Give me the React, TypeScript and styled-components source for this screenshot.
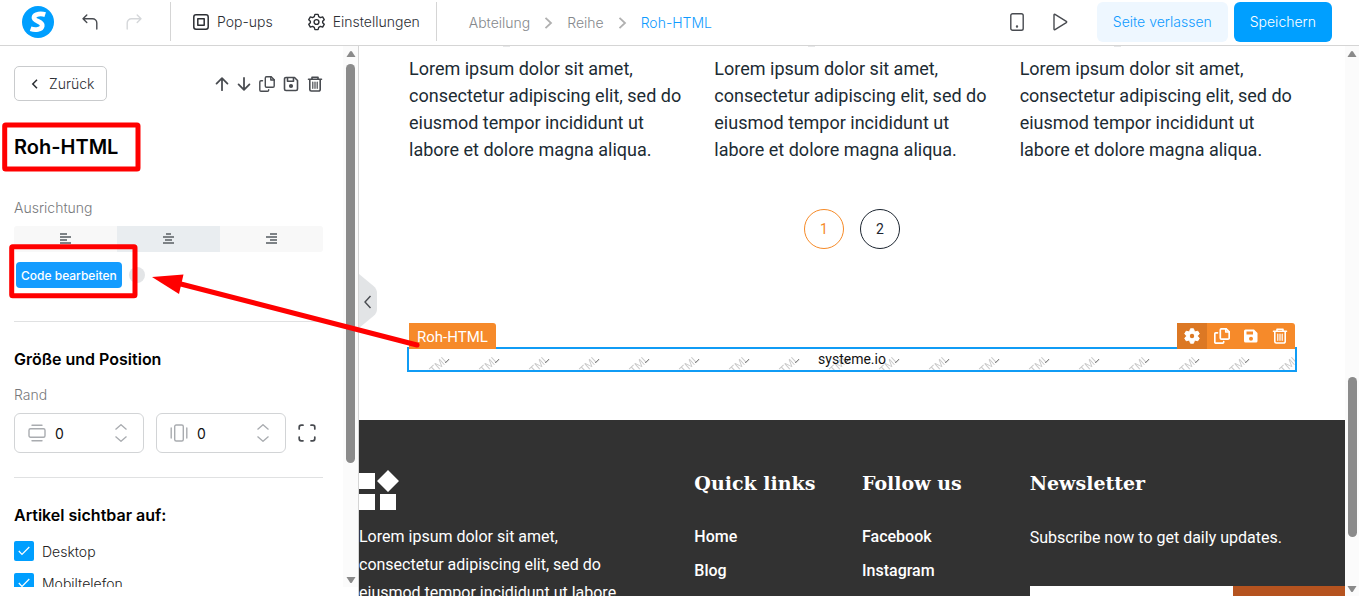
import React from "react";
import styled, { createGlobalStyle, css } from "styled-components";

const GlobalStyle = createGlobalStyle`
  *, *::before, *::after { box-sizing: border-box; }
  body { margin: 0; background: #fff; font-family: Inter, "Liberation Sans", sans-serif; font-size: 14px; color: #2b2e33; }
  h1, h2, h3, p, ul { margin: 0; padding: 0; }
  ul { list-style: none; }
  button, input { font: inherit; color: inherit; }
  button { border: 0; background: none; padding: 0; cursor: pointer; }
  a { color: inherit; text-decoration: none; }
  svg { display: block; flex: none; }
`;

const Page = styled.div`
  position: relative;
  display: flex;
  flex-direction: column;
  height: 100vh;
  overflow: hidden;
`;

/* ---------- top bar ---------- */
const TopBar = styled.header`
  display: flex;
  align-items: center;
  flex: none;
  height: 46px;
  padding: 0 27px 2px 22px;
  border-bottom: 1px solid #d5d5d5;
`;
const History = styled.div`
  display: flex;
  gap: 28px;
  padding: 0 28px;
`;
const IconButton = styled.button<{ $muted?: boolean }>`
  display: grid;
  place-items: center;
  color: ${(p) => (p.$muted ? "#d5d7da" : "#484b50")};
`;
const BarMenu = styled.nav`
  display: flex;
  align-items: center;
  gap: 35px;
  height: 39px;
  padding: 0 16px 0 22px;
  border: solid #d5d5d5;
  border-width: 0 1px;
`;
const BarItem = styled.button`
  display: flex;
  align-items: center;
  gap: 8px;
  font-weight: 300;
`;
const Crumbs = styled.nav`
  display: flex;
  align-items: center;
  gap: 14px;
  flex: 1;
  padding: 2px 0 0 32px;
  color: #b0b0b0;
`;
const Crumb = styled.a<{ $current?: boolean }>`
  font-weight: 300;
  color: ${(p) => (p.$current ? "#0f9bff" : "#85888c")};
`;
const Preview = styled.div`
  display: flex;
  gap: 29px;
  padding-right: 29px;
`;
const Actions = styled.div`
  display: flex;
  gap: 6px;
`;
const ActionButton = styled.button<{ $primary?: boolean }>`
  height: 40px;
  padding: 0 16px;
  border-radius: 6px;
  font-weight: 300;
  color: ${(p) => (p.$primary ? "#fff" : "#0f9bff")};
  background: ${(p) => (p.$primary ? "#009fff" : "#eef7ff")};
`;

/* ---------- scroll bars ---------- */
const Bar = styled.div<{ $width: number }>`
  display: flex;
  flex-direction: column;
  flex: none;
  width: ${(p) => p.$width}px;
  background: #fbfbfb;
`;
const BarArrow = styled.div<{ $down?: boolean }>`
  display: grid;
  justify-items: center;
  align-items: ${(p) => (p.$down ? "end" : "start")};
  height: 18px;
  padding: 4px 0 3px;
  color: #8a8a8a;
`;
const Track = styled.div<{ $before: number; $after: number; $size: number }>`
  display: grid;
  flex: 1;
  justify-content: center;
  grid-template-columns: 9px;
  grid-template-rows: ${(p) => `${p.$before}fr ${p.$size}fr ${p.$after}fr`};
`;
const Thumb = styled.div`
  grid-row: 2;
  border-radius: 5px;
  background: #8b8b8b;
`;

/* ---------- side panel ---------- */
const Body = styled.div`
  display: flex;
  flex: 1;
  min-height: 0;
`;
const Side = styled.aside`
  display: flex;
  flex: none;
  width: 359px;
  padding-bottom: 9px;
  border-right: 1px solid #d5d5d5;
`;
const SideContent = styled.div`
  flex: 1;
  overflow: hidden;
  padding: 20px 20px 0 14px;
`;
const SideHead = styled.div`
  display: flex;
  align-items: center;
  justify-content: space-between;
`;
const BackButton = styled.button`
  display: flex;
  align-items: center;
  gap: 10px;
  height: 35px;
  padding: 0 12px 0 16px;
  border: 1px solid #c9cbcd;
  border-radius: 5px;
  font-weight: 300;
`;
const ItemTools = styled.div`
  display: flex;
  gap: 8px;
`;
const Title = styled.h1`
  padding: 32px 0 37px;
  font-size: 20px;
  line-height: 28px;
  font-weight: 600;
  color: #000;
`;
const FieldLabel = styled.div`
  line-height: 20px;
  font-weight: 300;
  color: #77797c;
`;
const Segments = styled.div`
  display: grid;
  grid-template-columns: repeat(3, 1fr);
  margin: 8px 0 10px;
  border-radius: 3px;
  overflow: hidden;
`;
const Segment = styled.button<{ $active?: boolean }>`
  display: grid;
  place-items: center;
  height: 26px;
  color: #7d8286;
  background: ${(p) => (p.$active ? "#e9edf0" : "#f8f8f8")};
`;
const CodeRow = styled.div`
  display: flex;
  align-items: center;
  gap: 7px;
  padding: 0 2px 33px;
  border-bottom: 1px solid #e0e1e2;
`;
const CodeButton = styled.button`
  height: 26px;
  padding: 0 5px;
  border-radius: 4px;
  font-size: 12px;
  font-weight: 500;
  color: #fff;
  background: #149cff;
`;
const HelpDot = styled.button`
  width: 16px;
  height: 16px;
  border-radius: 50%;
  background: #e3e5e7;
`;
const SectionTitle = styled.h2`
  padding: 25px 0 14px;
  font-size: 16px;
  line-height: 24px;
  font-weight: 600;
  color: #000;
`;
const Margins = styled.div`
  display: flex;
  align-items: center;
  gap: 12px;
  padding: 8px 0 24px;
  border-bottom: 1px solid #e0e1e2;
`;
const NumberBox = styled.label`
  display: flex;
  align-items: center;
  gap: 9px;
  width: 130px;
  height: 40px;
  padding: 0 16px 0 13px;
  border: 1px solid #d2d4d6;
  border-radius: 6px;
  color: #a9acb0;

  input {
    flex: 1;
    min-width: 0;
    padding: 0;
    border: 0;
    outline: 0;
    background: none;
    color: #111;
  }
`;
const Steppers = styled.span`
  display: grid;
  gap: 6px;
`;
const Checks = styled.div`
  display: grid;
  gap: 12px;
`;
const Check = styled.label`
  display: flex;
  align-items: center;
  gap: 8px;
  font-weight: 300;
  color: #222;
`;
const CheckMark = styled.span`
  display: grid;
  place-items: center;
  width: 20px;
  height: 20px;

  > * { grid-area: 1 / 1; }
  input {
    appearance: none;
    width: 20px;
    height: 20px;
    margin: 0;
    border-radius: 2px;
    background: #009fff;
  }
  svg { pointer-events: none; }
`;

/* ---------- canvas ---------- */
const Canvas = styled.main`
  position: relative;
  display: flex;
  flex-direction: column;
  flex: 1;
  min-width: 0;
  overflow: hidden;
  font-family: Roboto, "Liberation Sans", sans-serif;
  color: #1c2b33;
`;
const Collapse = styled.button`
  position: absolute;
  left: 0;
  top: 227px;
`;
const Columns = styled.div`
  display: grid;
  grid-template-columns: repeat(3, 1fr);
  gap: 30px;
  padding: 0 50px;
`;
const Column = styled.div`
  font-size: 18px;
  line-height: 27px;
`;
const Tick = styled.div`
  width: 7px;
  height: 1px;
  margin: 0 0 8px 94px;
  background: #e6e7e8;
`;
const Pager = styled.nav`
  display: flex;
  justify-content: center;
  gap: 16px;
  padding: 46px 0 98px;
`;
const PageButton = styled.button<{ $current?: boolean }>`
  width: 40px;
  height: 40px;
  border: 1px solid currentColor;
  border-radius: 50%;
  font-size: 14px;
  color: ${(p) => (p.$current ? "#f68a27" : "#1c2530")};
`;
const Selected = styled.section`
  position: relative;
  height: 25px;
  margin: 0 48px 48px;
  border: 2px solid #109cf5;
  text-align: center;
  font-size: 14px;
  line-height: 21px;
  color: #111;
`;
const Watermark = styled.svg`
  position: absolute;
  inset: 0;
  width: 100%;
  height: 100%;
`;
const SelectedText = styled.p`
  position: relative;
`;
const tag = css`
  position: absolute;
  top: -26px;
  height: 26px;
  border-radius: 0 3px 0 0;
  background: #f68a2a;
  color: #fff;
`;
const TagName = styled.div`
  ${tag}
  left: 0;
  padding: 0 8px;
  font-size: 15px;
  line-height: 28px;
`;
const TagTools = styled.div`
  ${tag}
  right: 0;
  display: flex;
  padding-right: 1px;
  overflow: hidden;
`;
const TagTool = styled.button<{ $active?: boolean }>`
  display: grid;
  place-items: center;
  width: ${(p) => (p.$active ? 30 : 29)}px;
  background: ${(p) => (p.$active ? "#dc7824" : "none")};
`;

/* ---------- site footer ---------- */
const Footer = styled.footer`
  flex: 1;
  min-height: 0;
  padding-top: 48px;
  background: #323232;
  color: #fff;
`;
const FooterGrid = styled.div`
  display: grid;
  grid-template-columns: 4fr 2fr 2fr 4fr;
  margin-right: -20px;
`;
const About = styled.p`
  padding: 13px 64px 0 0;
  font-size: 16px;
  line-height: 28px;
`;
const FooterTitle = styled.h3`
  padding-bottom: 25px;
  font-family: "Roboto Slab", "DejaVu Serif", serif;
  font-size: 19px;
  line-height: 30px;
  font-weight: 700;
`;
const Links = styled.ul`
  display: grid;
  gap: 6px;
  font-size: 16px;
  line-height: 28px;
  font-weight: 500;
`;
const Note = styled.p`
  font-size: 16px;
  line-height: 30px;
`;
const Subscribe = styled.form`
  display: grid;
  grid-template-columns: 203px 1fr;
  height: 50px;
  margin-top: 33px;

  input { min-width: 0; border: 0; background: #fff; }
  button { background: #b5531f; }
`;

const Annotations = styled.svg`
  position: absolute;
  left: 0;
  top: 0;
  pointer-events: none;
`;

/* ---------- icons ---------- */
type IconProps = { size?: number; sw?: number; children: React.ReactNode };
const Icon = ({ size = 16, sw = 1.5, children }: IconProps) => (
  <svg width={size} height={size} viewBox="0 0 16 16" fill="none" stroke="currentColor" strokeWidth={sw} strokeLinecap="round" strokeLinejoin="round" aria-hidden="true">
    {children}
  </svg>
);
const Undo = () => <Icon sw={1.4}><path d="M4.8 1 1 4.8l3.8 3.8M1 4.8h9.5a4.3 4.3 0 0 1 4.3 4.3V15" /></Icon>;
const Redo = () => <Icon sw={1.4}><path d="m11.2 1 3.8 3.8-3.8 3.8M15 4.8H5.5a4.3 4.3 0 0 0-4.3 4.3V15" /></Icon>;
const Popup = () => <Icon><rect x=".8" y=".8" width="14.4" height="14.4" rx="2.2" /><rect x="4.8" y="4.8" width="6.4" height="6.4" /></Icon>;
const GearPath = "M6.5.8h3l.6 2.1 1.6.9 2.1-.6 1.5 2.6L13.8 7.3v1.4l1.5 1.5-1.5 2.6-2.1-.6-1.600.9-.6 2.1h-3l-.6-2.100-1.600-.9-2.100.6-1.500-2.600L2.200 8.700V7.300L.7 5.800l1.500-2.600 2.100.6 1.600-.9z";
const Gear = () => <svg width="17" height="18" viewBox="0 -.5 16 17" fill="none" stroke="currentColor" strokeWidth="1.3" strokeLinejoin="round"><path d={GearPath} /><circle cx="8" cy="8" r="2.3" /></svg>;
const Chevron = () => <svg width="9" height="12" viewBox="0 0 9 12" fill="none" stroke="currentColor" strokeWidth="1.8"><path d="m1.5 .8 5.500 5.200-5.500 5.200" /></svg>;
const Phone = () => <svg width="14" height="18" viewBox="0 0 14 18" fill="none" stroke="currentColor" strokeWidth="1.4"><rect x=".8" y=".8" width="12.4" height="16.4" rx="1.8" /><circle cx="7" cy="13.5" r=".5" fill="currentColor" /></svg>;
const Play = () => <svg width="15" height="18" viewBox="0 0 15 18" fill="none" stroke="currentColor" strokeWidth="1.4" strokeLinejoin="round"><path d="M1 2v14q0 1.200 1 .6l11.300-7q.8-.6 0-1.200L2 1.400Q1 .8 1 2z" /></svg>;
const ArrowUp = () => <Icon size={14} sw={2}><path d="M8 15V1.800M1.800 7.600 8 1.400l6.200 6.200" /></Icon>;
const ArrowDown = () => <Icon size={14} sw={2}><path d="M8 1v13.200M1.800 8.400 8 14.600l6.200-6.200" /></Icon>;
const Copy = ({ sw = 1.4 }: { sw?: number }) => <Icon sw={sw}><path d="M7.500.8h4.700l3 3V10a1.200 1.200 0 0 1-1.200 1.200H7.500A1.200 1.200 0 0 1 6.300 10V2A1.200 1.200 0 0 1 7.500.8z" /><path d="M11.800.8V4h3.400M3.500 4.800H2A1.200 1.200 0 0 0 .8 6v8A1.200 1.200 0 0 0 2 15.200h6.500A1.200 1.200 0 0 0 9.700 14v-.3" /></Icon>;
const Save = () => <Icon sw={1.6}><path d="M3 1.500h8.500l3 3V13a1.500 1.500 0 0 1-1.500 1.500H3A1.500 1.500 0 0 1 1.500 13V3A1.500 1.500 0 0 1 3 1.500z" /><path d="M4.500 1.800v3.500h6V1.800" /><circle cx="8" cy="10" r="1.300" fill="currentColor" /></Icon>;
const Trash = () => <Icon sw={1.6}><path d="M1.500 3.300h13M5 3V1.300h6V3M2.800 3.500V13.500a1.500 1.500 0 0 0 1.500 1.500h7.400a1.500 1.500 0 0 0 1.500-1.500V3.500" /><path strokeWidth="1.200" d="M5.800 6v6.300M8 6v6.300M10.200 6v6.300" /></Icon>;
const GearSolid = () => <svg width="16" height="16" viewBox="0 0 16 16"><path fill="#fff" stroke="#fff" strokeLinejoin="round" d={GearPath} /><circle cx="8" cy="8" r="2.200" fill="#dc7824" /></svg>;
const SaveSolid = () => <svg width="14" height="14" viewBox="0 0 14 14"><path fill="#fff" fillRule="evenodd" d="M1.500.5h8.500l3.500 3.500v8a1.500 1.500 0 0 1-1.500 1.500H1.500A1.500 1.500 0 0 1 0 12V2A1.500 1.500 0 0 1 1.500.5zM2.500 2.500v3h6.500v-3zM7 7.700a2 2 0 1 0 0 4 2 2 0 0 0 0-4z" /></svg>;
const AlignIcon = ({ rows }: { rows: [number, number][] }) => (
  <svg width="11" height="12" viewBox="0 0 11 12" fill="none" stroke="currentColor" strokeWidth="2">
    {rows.map(([a, b], i) => <path key={i} d={`M${a} ${1 + i * 3}H${b}`} />)}
  </svg>
);
const MarginV = () => <svg width="18" height="18" viewBox="0 0 18 18" fill="none" stroke="currentColor" strokeWidth="1.4" strokeLinecap="round"><rect x="1" y="4.7" width="16" height="8.6" rx="1.5" /><path d="M4 1.200h10M4 16.800h10" /></svg>;
const MarginH = () => <svg width="18" height="18" viewBox="0 0 18 18" fill="none" stroke="currentColor" strokeWidth="1.4" strokeLinecap="round"><rect x="4.7" y="1" width="8.6" height="16" rx="1.5" /><path d="M1.200 4v10M16.800 4v10" /></svg>;
const Expand = () => <svg width="18" height="18" viewBox="0 0 18 18" fill="none" stroke="#484b50" strokeWidth="1.7" strokeLinecap="round"><path d="M1.200 5V3.200a2 2 0 0 1 2-2H5M13 1.200h1.800a2 2 0 0 1 2 2V5M16.800 13v1.800a2 2 0 0 1-2 2H13M5 16.800H3.200a2 2 0 0 1-2-2V13" /></svg>;
const Step = ({ down }: { down?: boolean }) => <svg width="12" height="6" viewBox="0 0 12 6" fill="none" stroke="currentColor" strokeWidth="1.3"><path d={down ? "M.5.5 6 5.300 11.500.5" : "M.5 5.500 6 .7l5.500 4.800"} /></svg>;
const Triangle = ({ down }: { down?: boolean }) => <svg width="10" height="8" viewBox="0 0 10 8"><path fill="currentColor" d={down ? "M.5 1h9L6 6.500q-1 1-2 0z" : "M.5 7h9L6 1.500q-1-1-2 0z"} /></svg>;

type ScrollbarProps = { width: number; before: number; size: number; after: number };
const Scrollbar = ({ width, before, size, after }: ScrollbarProps) => (
  <Bar $width={width} aria-hidden="true">
    <BarArrow><Triangle /></BarArrow>
    <Track $before={before} $size={size} $after={after}><Thumb /></Track>
    <BarArrow $down><Triangle down /></BarArrow>
  </Bar>
);

const NumberField = ({ label, icon }: { label: string; icon: React.ReactNode }) => (
  <NumberBox>
    {icon}
    <input type="text" inputMode="numeric" defaultValue="0" aria-label={label} />
    <Steppers><Step /><Step down /></Steppers>
  </NumberBox>
);

const CheckField = ({ label }: { label: string }) => (
  <Check>
    <CheckMark>
      <input type="checkbox" defaultChecked />
      <svg width="12" height="10" viewBox="0 0 12 10" fill="none" stroke="#fff" strokeWidth="1.2"><path d="M.8 5 4 8.500 11.300 1" /></svg>
    </CheckMark>
    {label}
  </Check>
);

const lorem = "Lorem ipsum dolor sit amet, consectetur adipiscing elit, sed do eiusmod tempor incididunt ut labore et dolore magna aliqua.";

const linkGroups = [
  { title: "Quick links", links: ["Home", "Blog"] },
  { title: "Follow us", links: ["Facebook", "Instagram"] },
];

export default function App() {
  return (
    <Page>
      <GlobalStyle />
      <TopBar>
        <svg width="32" height="32" viewBox="0 0 32 32" aria-label="systeme.io">
          <circle cx="16" cy="16" r="16" fill="#009fff" />
          <path d="M23.2 8.600c-3.600-1.200-10.600-1.200-11.200 2.700-.6 4.200 8.900 3.700 8.200 8.500-.6 4-7 4.600-11.600 3" fill="none" stroke="#fff" strokeWidth="4.8" />
        </svg>
        <History>
          <IconButton aria-label="Rückgängig"><Undo /></IconButton>
          <IconButton aria-label="Wiederholen" $muted><Redo /></IconButton>
        </History>
        <BarMenu>
          <BarItem><Popup />Pop-ups</BarItem>
          <BarItem><Gear />Einstellungen</BarItem>
        </BarMenu>
        <Crumbs>
          <Crumb href="#abteilung">Abteilung</Crumb>
          <Chevron />
          <Crumb href="#reihe">Reihe</Crumb>
          <Chevron />
          <Crumb href="#roh-html" $current>Roh-HTML</Crumb>
        </Crumbs>
        <Preview>
          <IconButton aria-label="Mobilansicht"><Phone /></IconButton>
          <IconButton aria-label="Vorschau"><Play /></IconButton>
        </Preview>
        <Actions>
          <ActionButton>Seite verlassen</ActionButton>
          <ActionButton $primary>Speichern</ActionButton>
        </Actions>
      </TopBar>

      <Body>
        <Side>
          <SideContent>
            <SideHead>
              <BackButton>
                <svg width="8" height="10" viewBox="0 0 8 10" fill="none" stroke="currentColor" strokeWidth="1.5"><path d="M6 .8 1.800 5 6 9.200" /></svg>
                Zurück
              </BackButton>
              <ItemTools>
                <IconButton aria-label="Nach oben"><ArrowUp /></IconButton>
                <IconButton aria-label="Nach unten"><ArrowDown /></IconButton>
                <IconButton aria-label="Kopieren"><Copy /></IconButton>
                <IconButton aria-label="Sichern"><Save /></IconButton>
                <IconButton aria-label="Löschen"><Trash /></IconButton>
              </ItemTools>
            </SideHead>
            <Title>Roh-HTML</Title>
            <FieldLabel>Ausrichtung</FieldLabel>
            <Segments>
              <Segment aria-label="Links"><AlignIcon rows={[[0, 7], [0, 11], [0, 7], [0, 11]]} /></Segment>
              <Segment aria-label="Zentriert" $active><AlignIcon rows={[[3, 8], [0, 11], [2, 9], [0, 11]]} /></Segment>
              <Segment aria-label="Rechts"><AlignIcon rows={[[4, 11], [0, 11], [4, 11], [0, 11]]} /></Segment>
            </Segments>
            <CodeRow>
              <CodeButton>Code bearbeiten</CodeButton>
              <HelpDot aria-label="Hilfe" />
            </CodeRow>
            <SectionTitle>Größe und Position</SectionTitle>
            <FieldLabel>Rand</FieldLabel>
            <Margins>
              <NumberField label="Rand vertikal" icon={<MarginV />} />
              <NumberField label="Rand horizontal" icon={<MarginH />} />
              <IconButton aria-label="Alle Seiten"><Expand /></IconButton>
            </Margins>
            <SectionTitle>Artikel sichtbar auf:</SectionTitle>
            <Checks>
              <CheckField label="Desktop" />
              <CheckField label="Mobiltelefon" />
            </Checks>
          </SideContent>
          <Scrollbar width={15} before={0} size={399} after={106} />
        </Side>

        <Canvas>
          <Columns>
            {[0, 1, 2].map((i) => (
              <Column key={i}><Tick /><p>{lorem}</p></Column>
            ))}
          </Columns>
          <Pager aria-label="Seiten">
            <PageButton $current>1</PageButton>
            <PageButton>2</PageButton>
          </Pager>
          <Selected>
            <Watermark aria-hidden="true">
              <defs>
                <pattern id="mark" width="50" height="40" patternUnits="userSpaceOnUse">
                  <text x="19" y="31" transform="rotate(-43 19 31)" fontFamily="Liberation Sans" fontSize="11" fill="#c9c9c9">HTML</text>
                  <path d="m36 14 4-4" stroke="#888" />
                </pattern>
              </defs>
              <rect width="100%" height="100%" fill="url(#mark)" />
            </Watermark>
            <SelectedText>systeme.io</SelectedText>
            <TagName>Roh-HTML</TagName>
            <TagTools>
              <TagTool $active aria-label="Einstellungen"><GearSolid /></TagTool>
              <TagTool aria-label="Kopieren"><Copy sw={1.7} /></TagTool>
              <TagTool aria-label="Sichern"><SaveSolid /></TagTool>
              <TagTool aria-label="Löschen"><Trash /></TagTool>
            </TagTools>
          </Selected>
          <Footer>
            <FooterGrid>
              <div>
                <svg width="42" height="42" viewBox="0 0 42 42" fill="#fff" aria-hidden="true">
                  <path d="M0 5h16v16H0zM0 26h16v16H0zM21 26h16v16H21zM29 2l11 11-11 11-11-11z" />
                </svg>
                <About>{lorem}</About>
              </div>
              {linkGroups.map((g) => (
                <div key={g.title}>
                  <FooterTitle>{g.title}</FooterTitle>
                  <Links>{g.links.map((l) => <li key={l}><a href={"#" + l}>{l}</a></li>)}</Links>
                </div>
              ))}
              <div>
                <FooterTitle>Newsletter</FooterTitle>
                <Note>Subscribe now to get daily updates.</Note>
                <Subscribe>
                  <input type="email" aria-label="E-Mail" />
                  <button type="button" aria-label="Subscribe" />
                </Subscribe>
              </div>
            </FooterGrid>
          </Footer>
          <Collapse aria-label="Leiste einklappen">
            <svg width="18" height="56" viewBox="0 0 18 56">
              <path d="M0 1 14.500 13Q18 16 18 20v16q0 4-3.500 7L0 55z" fill="#e2e4e6" />
              <path d="m11.500 23-5.500 6 5.500 6" fill="none" stroke="#484b50" strokeWidth="1.4" />
            </svg>
          </Collapse>
        </Canvas>
        <Scrollbar width={14} before={313} size={160} after={41} />
      </Body>

      <Annotations width="440" height="380" viewBox="0 0 440 380" fill="none" stroke="#f00" aria-hidden="true">
        <rect x="4.7" y="125" width="133.3" height="44" rx="1" strokeWidth="5" />
        <rect x="11.7" y="246.7" width="123.3" height="49" rx="1" strokeWidth="5" />
        <path d="M175 282.500 417 345" strokeWidth="5" strokeLinecap="round" />
        <path d="m152 277 31.500-2.500L179 294z" fill="#f00" stroke="none" />
      </Annotations>
    </Page>
  );
}
